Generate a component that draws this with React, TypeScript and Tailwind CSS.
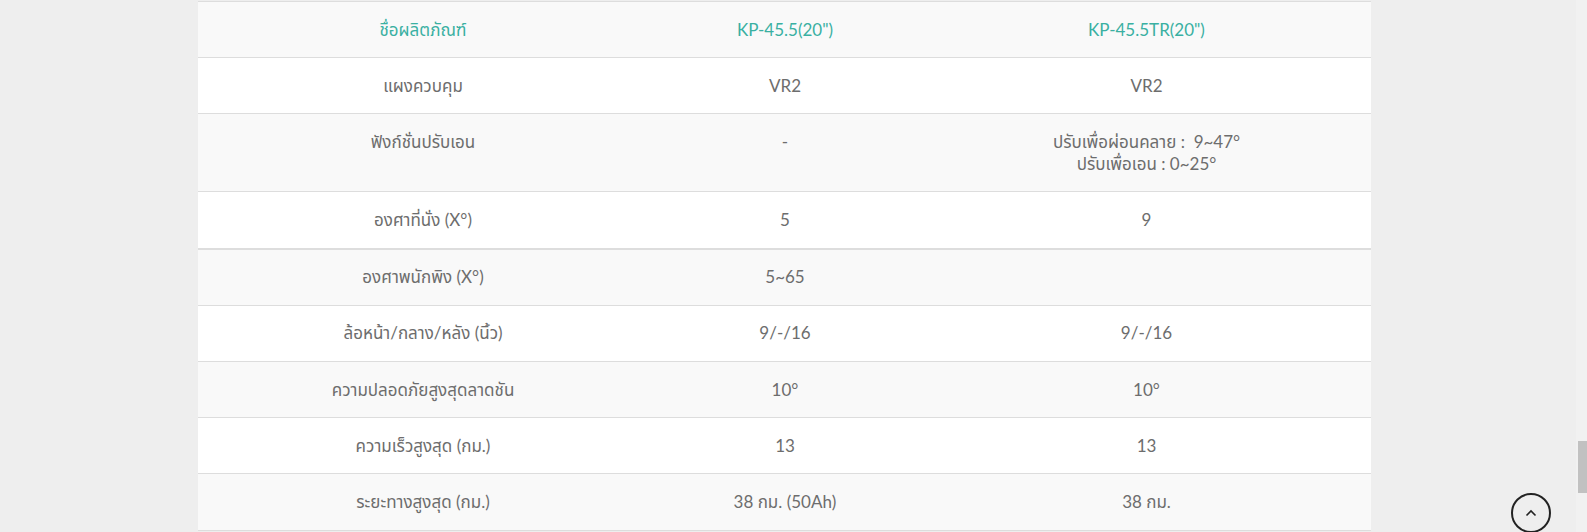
import React from 'react';

type Row = { label: string; a: string[]; b: string[] };

const rows: Row[] = [
  { label: 'แผงควบคุม', a: ['VR2'], b: ['VR2'] },
  { label: 'ฟังก์ชั่นปรับเอน', a: ['-'], b: ['ปรับเพื่อผ่อนคลาย :  9~47°', 'ปรับเพื่อเอน : 0~25°'] },
  { label: 'องศาที่นั่ง (X°)', a: ['5'], b: ['9'] },
  { label: 'องศาพนักพิง (X°)', a: ['5~65'], b: [''] },
  { label: 'ล้อหน้า/กลาง/หลัง (นิ้ว)', a: ['9/-/16'], b: ['9/-/16'] },
  { label: 'ความปลอดภัยสูงสุดลาดชัน', a: ['10°'], b: ['10°'] },
  { label: 'ความเร็วสูงสุด (กม.)', a: ['13'], b: ['13'] },
  { label: 'ระยะทางสูงสุด (กม.)', a: ['38 กม. (50Ah)'], b: ['38 กม.'] },
];

const cell = 'px-4 py-[16.6px] text-center align-top whitespace-pre';
const head = 'px-4 py-[16.5px] text-center align-top whitespace-pre font-normal';

const App: React.FC = () => {
  return (
    <div
      className="relative flex h-[532px] w-[1587px] overflow-hidden bg-[#eeeeee] text-[17px] leading-[22px] text-[#6d6d6d] [font-stretch:82%]"
      style={{ fontFamily: 'Lato, "Noto Sans Thai", "Noto Sans Thai UI", "Noto Sans", sans-serif' }}
    >
      <div className="flex-1 pl-[198px] pt-px">
        <table className="w-[1173px] table-fixed border-collapse bg-white">
          <colgroup>
            <col className="w-[450px]" />
            <col className="w-[274px]" />
            <col className="w-[449px]" />
          </colgroup>
          <thead>
            <tr className="border-t border-b border-[#dddddd] bg-[#f9f9f9] text-[#3ab0a2]">
              <th className={head}>ชื่อผลิตภัณฑ์</th>
              <th className={head}>KP-45.5(20")</th>
              <th className={head}>KP-45.5TR(20")</th>
            </tr>
          </thead>
          <tbody>
            {rows.map((r, i) => (
              <tr
                key={r.label}
                className={`border-[#dddddd] ${i === 2 ? 'border-b-2' : 'border-b'} ${i % 2 === 1 ? 'bg-[#f9f9f9]' : 'bg-white'}`}
              >
                <td className={cell}>{r.label}</td>
                <td className={cell}>{r.a.join('\n')}</td>
                <td className={cell}>{r.b.join('\n')}</td>
              </tr>
            ))}
          </tbody>
        </table>
      </div>

      {/* fake page scrollbar */}
      <div className="w-[11px] bg-[#f1f1f1] pl-[2px] pt-[441px]">
        <div className="h-[52px] w-[9px] bg-[#c1c1c1]" />
      </div>

      {/* back to top */}
      <button className="absolute left-[1511px] top-[493px] flex h-[40px] w-[40px] items-center justify-center rounded-full border-2 border-[#222222]">
        <svg width="12" height="8" viewBox="0 0 12 8" fill="none">
          <path d="M1.5 6.5 L6 2 L10.5 6.5" stroke="#222222" strokeWidth="1.6" />
        </svg>
      </button>
    </div>
  );
};

export default App;
